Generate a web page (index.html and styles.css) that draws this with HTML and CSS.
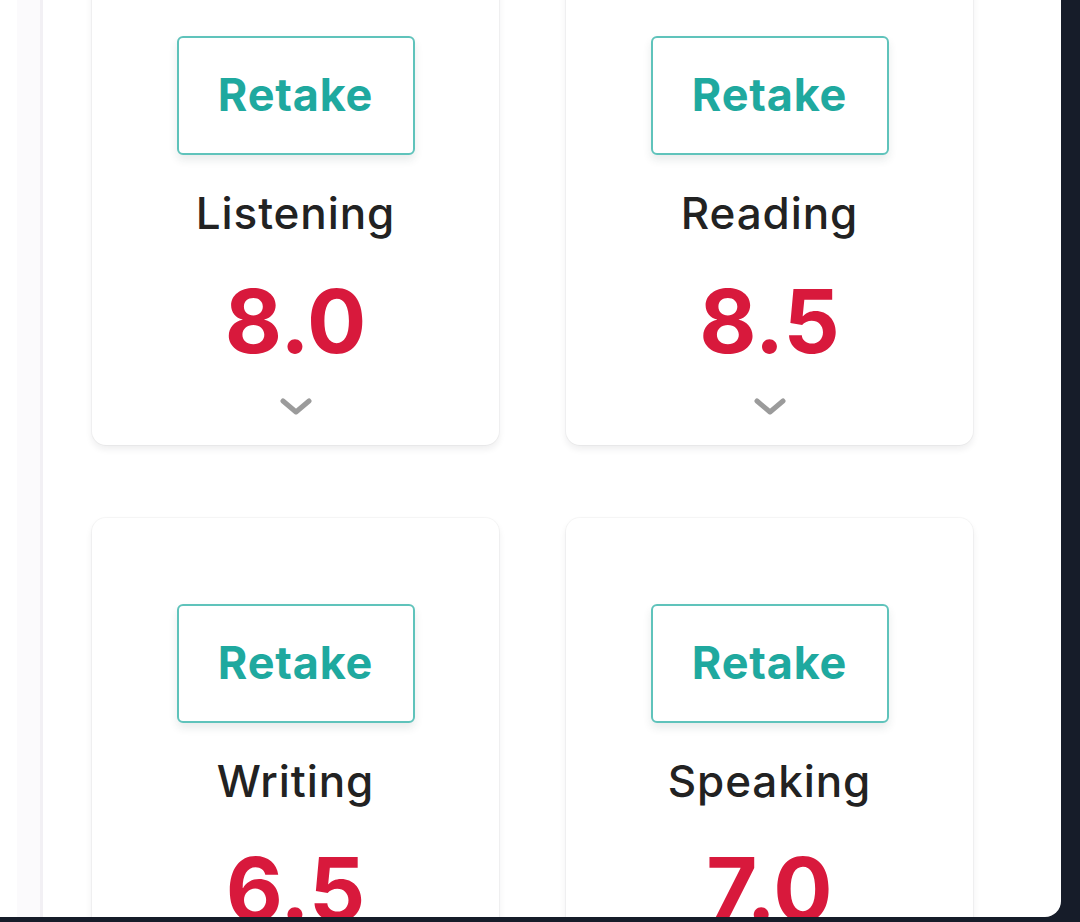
FILE: index.html
```html
<!DOCTYPE html>
<html lang="en">
<head>
<meta charset="utf-8">
<title>Scores</title>
<link rel="stylesheet" href="styles.css">
</head>
<body>
<div class="panel">
  <div class="edge"></div>
  <div class="grid">
    <div class="card">
      <button class="retake">Retake</button>
      <div class="label">Listening</div>
      <div class="score">8.0</div>
      <svg class="chev" width="32" height="18" viewBox="0 0 32 18"><path d="M3 3 L16 14 L29 3" fill="none" stroke="#9b9b9b" stroke-width="5" stroke-linecap="round" stroke-linejoin="round"/></svg>
    </div>
    <div class="card">
      <button class="retake">Retake</button>
      <div class="label">Reading</div>
      <div class="score">8.5</div>
      <svg class="chev" width="32" height="18" viewBox="0 0 32 18"><path d="M3 3 L16 14 L29 3" fill="none" stroke="#9b9b9b" stroke-width="5" stroke-linecap="round" stroke-linejoin="round"/></svg>
    </div>
    <div class="card">
      <button class="retake">Retake</button>
      <div class="label">Writing</div>
      <div class="score">6.5</div>
      <svg class="chev" width="32" height="18" viewBox="0 0 32 18"><path d="M3 3 L16 14 L29 3" fill="none" stroke="#9b9b9b" stroke-width="5" stroke-linecap="round" stroke-linejoin="round"/></svg>
    </div>
    <div class="card">
      <button class="retake">Retake</button>
      <div class="label">Speaking</div>
      <div class="score">7.0</div>
      <svg class="chev" width="32" height="18" viewBox="0 0 32 18"><path d="M3 3 L16 14 L29 3" fill="none" stroke="#9b9b9b" stroke-width="5" stroke-linecap="round" stroke-linejoin="round"/></svg>
    </div>
  </div>
</div>
</body>
</html>
```
FILE: styles.css
```css
html, body {
  margin: 0;
  padding: 0;
}
body {
  background: #161c29;
  width: 1080px;
  height: 922px;
  overflow: hidden;
  font-family: Inter, "Liberation Sans", sans-serif;
}
.panel {
  width: 1061px;
  height: 917px;
  background: #ffffff;
  border-bottom-right-radius: 16px;
  overflow: hidden;
  display: flex;
  align-items: flex-start;
}
.edge {
  flex: none;
  margin-left: 17px;
  width: 23px;
  height: 917px;
  background: #fbfafc;
  border-right: 3px solid #f2f0f4;
}
.grid {
  flex: none;
  margin-left: 49px;
  margin-top: -50px;
  display: grid;
  grid-template-columns: 407px 407px;
  column-gap: 67px;
  row-gap: 73px;
}
.card {
  height: 495px;
  box-sizing: border-box;
  padding-top: 86px;
  background: #fff;
  border-radius: 14px;
  box-shadow: 0 4px 7px rgba(20, 20, 40, 0.08), 0 0 0 1px rgba(20, 20, 40, 0.035);
  display: flex;
  flex-direction: column;
  align-items: center;
}
.retake {
  width: 238px;
  height: 119px;
  box-sizing: border-box;
  background: #fff;
  border: 2px solid #5fc3bb;
  border-radius: 6px;
  box-shadow: 0 5px 8px rgba(30, 60, 60, 0.10);
  color: #1fa99f;
  font-family: Inter, "Liberation Sans", sans-serif;
  font-weight: 700;
  font-size: 45px;
  letter-spacing: 0.8px;
  padding: 0 0 2px 0;
  cursor: pointer;
}
.label {
  margin-top: 33px;
  height: 50px;
  line-height: 50px;
  font-size: 44px;
  color: #222;
  font-weight: 500;
  letter-spacing: 0.9px;
}
.score {
  margin-top: 38px;
  height: 90px;
  line-height: 90px;
  font-size: 88px;
  font-weight: 700;
  color: #d8193c;
}
.chev {
  margin-top: 32px;
  display: block;
}
```
